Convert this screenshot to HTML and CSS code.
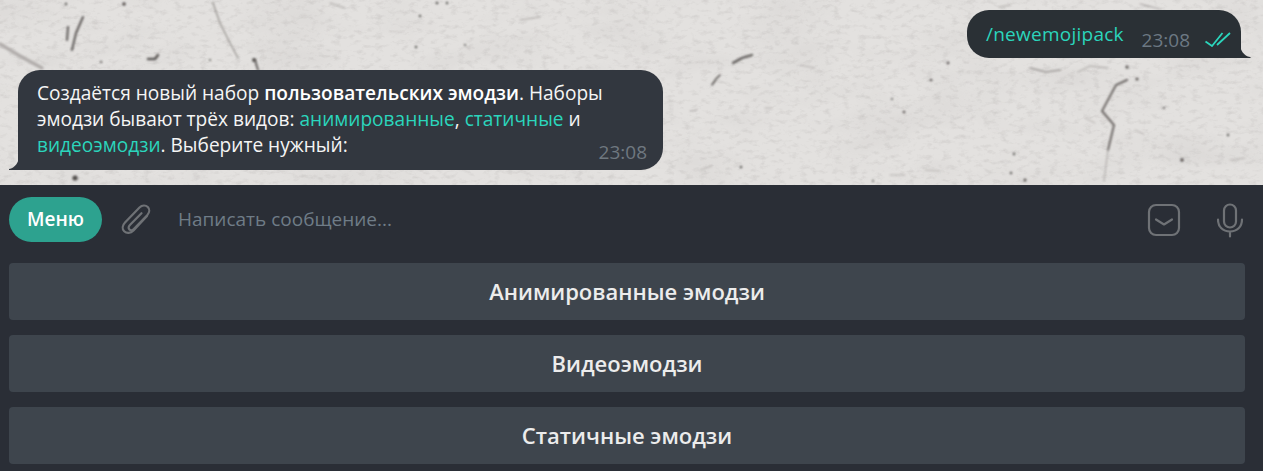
FILE: index.html
```html
<!DOCTYPE html>
<html lang="ru">
<head>
<meta charset="utf-8">
<title>Telegram</title>
<link rel="stylesheet" href="styles.css">
</head>
<body>
<div class="app">
  <section class="chat">
    <svg class="wall" width="1263" height="185" viewBox="0 0 1263 185" aria-hidden="true">
      <defs>
        <filter id="grain" x="0" y="0" width="100%" height="100%">
          <feTurbulence type="fractalNoise" baseFrequency="0.12 0.2" numOctaves="4" seed="11"/>
          <feColorMatrix values="0 0 0 0 0.45  0 0 0 0 0.43  0 0 0 0 0.42  2.2 0 0 0 -1.1"/>
        </filter>
        <filter id="cloud" x="0" y="0" width="100%" height="100%">
          <feTurbulence type="fractalNoise" baseFrequency="0.012 0.03" numOctaves="3" seed="4"/>
          <feColorMatrix values="0 0 0 0 0.6  0 0 0 0 0.58  0 0 0 0 0.57  2 0 0 0 -0.85"/>
        </filter>
        <filter id="soft"><feGaussianBlur stdDeviation="0.8"/></filter>
      </defs>
      <rect width="1263" height="185" fill="#e3e1df"/>
      <rect width="1263" height="185" filter="url(#cloud)" opacity=".3"/>
      <rect width="1263" height="185" filter="url(#grain)" opacity=".35"/>
      <g filter="url(#soft)" fill="none" stroke="#5a5654" stroke-linecap="round">
        <path d="M83 17 76 33 72 50" stroke-width="2"/>
        <path d="M68 27 67 40" stroke-width="2"/>
        <path d="M213 3 220 23 230 43 238 58" stroke-width="1" stroke="#77736f"/>
        <path d="M255 60 258 70" stroke-width="1.800"/>
        <path d="M148 59 155 59 158 55" stroke-width="2.600"/>
        <path d="M0 44 20 56 42 68" stroke-width="3.500" stroke="#b0acaa"/>
        <path d="M733 63 742 58 752 55" stroke-width="2.200"/>
        <path d="M712 85 716 79 720 75" stroke-width="1.600"/>
        <path d="M1030 68 1046 72 1060 70" stroke-width="1.500" stroke="#9a9694"/>
        <path d="M1078 72 1090 66 1108 68" stroke-width="1" stroke="#a19d9b"/>
        <path d="M1127 80 1116 85 1102 111 1114 125 1108 150" stroke-width="2" stroke="#6b6664"/>
        <path d="M1108 150 1104 181" stroke-width="1" stroke="#a5a19f"/>
        <path d="M1135 130 1144 134M1085 118 1095 123M800 65 815 68M690 111 697 110M765 108 772 108M890 175 905 175M925 170 940 171M1230 160 1245 158M700 170 712 166" stroke-width="1" stroke="#b0acaa"/>
        <path d="M330 3 345 8M520 20 540 17M1000 7 1010 5M1140 4 1160 9" stroke-width="1.200" stroke="#a8a4a2"/>
      </g>
      <g fill="#514d4b" filter="url(#soft)">
        <circle cx="1127" cy="67" r="1.500"/><circle cx="1137" cy="79" r="1.500"/><circle cx="1182" cy="160" r="1.800"/>
        <circle cx="1014" cy="154" r="1.200"/><circle cx="741" cy="167" r="1.200"/><circle cx="931" cy="80" r="1.300"/>
        <circle cx="904" cy="112" r="1.300"/><circle cx="1164" cy="108" r="1.100"/><circle cx="1228" cy="135" r="1.200"/>
        <circle cx="892" cy="99" r="1"/><circle cx="1025" cy="180" r="1.500"/><circle cx="1011" cy="173" r="1.200"/>
        <circle cx="873" cy="181" r="1"/><circle cx="948" cy="63" r="1.300"/><circle cx="75" cy="178" r="2.600"/>
        <circle cx="254" cy="60" r="1.900"/><circle cx="210" cy="60" r="1"/><circle cx="101" cy="62" r="1.100"/>
        <circle cx="124" cy="4" r="1.800"/><circle cx="66" cy="4" r="1.200"/><circle cx="416" cy="47" r="1.200"/>
        <circle cx="465" cy="45" r="1"/><circle cx="437" cy="3" r="1.200"/>
        <circle cx="447" cy="3" r="1.200"/><circle cx="420" cy="16" r="1.200"/>
      </g>
    </svg>

    <div class="row row-out">
      <div class="bubble bubble-out">
        <span class="cmd">/newemojipack</span>
        <span class="meta">23:08
          <svg class="checks" width="26" height="16" viewBox="0 0 26 16" aria-hidden="true"><path d="M0.500 10.500 7 15 17.500 2M12 14 25 2"/></svg>
        </span>
        <svg class="tail tail-out" width="11" height="14" viewBox="0 0 11 14" aria-hidden="true"><path d="M0 0C0 6 4 12 10 13L11 14H0Z"/></svg>
      </div>
    </div>

    <div class="row row-in">
      <div class="bubble bubble-in">
        <p class="msg">Создаётся новый набор <b>пользовательских эмодзи</b>. Наборы<br>эмодзи бывают трёх видов: <a class="link">анимированные</a>, <a class="link">статичные</a> и<br><a class="link">видеоэмодзи</a>. Выберите нужный:</p>
        <span class="time">23:08</span>
        <svg class="tail tail-in" width="10" height="14" viewBox="0 0 10 14" aria-hidden="true"><path d="M10 0C10 6 6 12 0 13V14H10Z"/></svg>
      </div>
    </div>
  </section>

  <section class="panel">
    <div class="composer">
      <button class="menu">Меню</button>
      <svg class="icon clip" width="32" height="34" viewBox="0 0 32 34" aria-hidden="true"><path d="M27 13 13.500 27.500C10.500 30.600 6.500 30.600 4.200 28.300 2 26 2.200 22.400 5 19.400L19.500 4.500C22.200 1.800 25.800 2 27.800 4 29.800 6 29.800 9.400 27.200 12.200L13.800 26C12.300 27.500 10.400 27.500 9.300 26.400 8.200 25.300 8.400 23.500 9.900 22L21.500 10.200"/></svg>
      <div class="input">Написать сообщение...</div>
      <svg class="icon kb" width="34" height="34" viewBox="0 0 34 34" aria-hidden="true"><rect x="2" y="2" width="30" height="30" rx="7"/><path d="M9 16.500 17 21.500 25 16.500"/></svg>
      <svg class="icon mic" width="28" height="36" viewBox="0 0 28 36" aria-hidden="true"><rect x="7" y="2.500" width="12" height="23" rx="6"/><path d="M1 17.500C1 25 6 29.500 13 29.500S25 25 25 17.500M13 29.500V34.500"/></svg>
    </div>
    <div class="keys">
      <button class="key">Анимированные эмодзи</button>
      <button class="key">Видеоэмодзи</button>
      <button class="key">Статичные эмодзи</button>
    </div>
  </section>
</div>
</body>
</html>
```
FILE: styles.css
```css
* { box-sizing: border-box; }
html, body { margin: 0; height: 100%; overflow: hidden; }
body { background: #282e33; font-family: "Open Sans", "Noto Sans", sans-serif; }
.app { width: 1263px; height: 471px; display: flex; flex-direction: column; }

.chat { position: relative; height: 185px; padding: 10px 22px 0 18px; display: flex; flex-direction: column; gap: 12px; }
.wall { position: absolute; left: 0; top: 0; }
.row { position: relative; display: flex; }
.row-out { justify-content: flex-end; }

.bubble { position: relative; color: #fff; }
.bubble-out { width: 274px; height: 48px; background: #2a3035; border-radius: 22px 22px 0 22px; padding: 9px 0 0 19px; }
.bubble-in { width: 645px; height: 100px; background: #32373f; border-radius: 22px 22px 22px 0; padding: 10px 0 0 19px; }
.cmd { font-size: 19px; line-height: 30px; color: #2bd5bc; letter-spacing: .25px; }
.meta { position: absolute; right: 10px; top: 18px; display: flex; align-items: center; gap: 15px; font-size: 19px; line-height: 24px; color: #6c7883; }
.checks { fill: none; stroke: #2bd5bc; stroke-width: 1.800; margin-bottom: 2px; }
.tail { position: absolute; bottom: 0; }
.tail-out { right: -10px; fill: #2a3035; }
.tail-in { left: -9px; fill: #32373f; }
.msg { margin: 0; font-size: 19.100px; line-height: 26px; color: #f5f5f5; }
.msg b { font-weight: 600; color: #fff; }
.link { color: #2bd5bc; }
.time { position: absolute; right: 16px; bottom: 6px; font-size: 19px; line-height: 24px; color: #6f7880; }

.panel { flex: 1; background: #2a2e36; padding: 12px 18px 0 9px; display: flex; flex-direction: column; }
.composer { height: 45px; display: flex; align-items: center; margin-bottom: 21px; }
.menu { width: 93px; height: 45px; border: 0; border-radius: 23px; background: #2da28f; color: #fff; font: 600 19px "Open Sans", sans-serif; padding: 0 0 2px; }
.icon { flex: none; fill: none; stroke: #6f7276; stroke-width: 2.200; stroke-linecap: round; stroke-linejoin: round; }
.clip { margin-left: 18px; }
.input { flex: 1; margin-left: 26px; font-size: 19px; line-height: 24px; color: #6f7c87; margin-bottom: 2px; }
.kb { margin-right: 36px; }

.keys { display: flex; flex-direction: column; gap: 15px; }
.key { height: 57px; border: 0; border-radius: 4px; background: #3e454d; color: #ececec; font: 600 22px "Open Sans", sans-serif; padding: 0 0 2px; }
```
